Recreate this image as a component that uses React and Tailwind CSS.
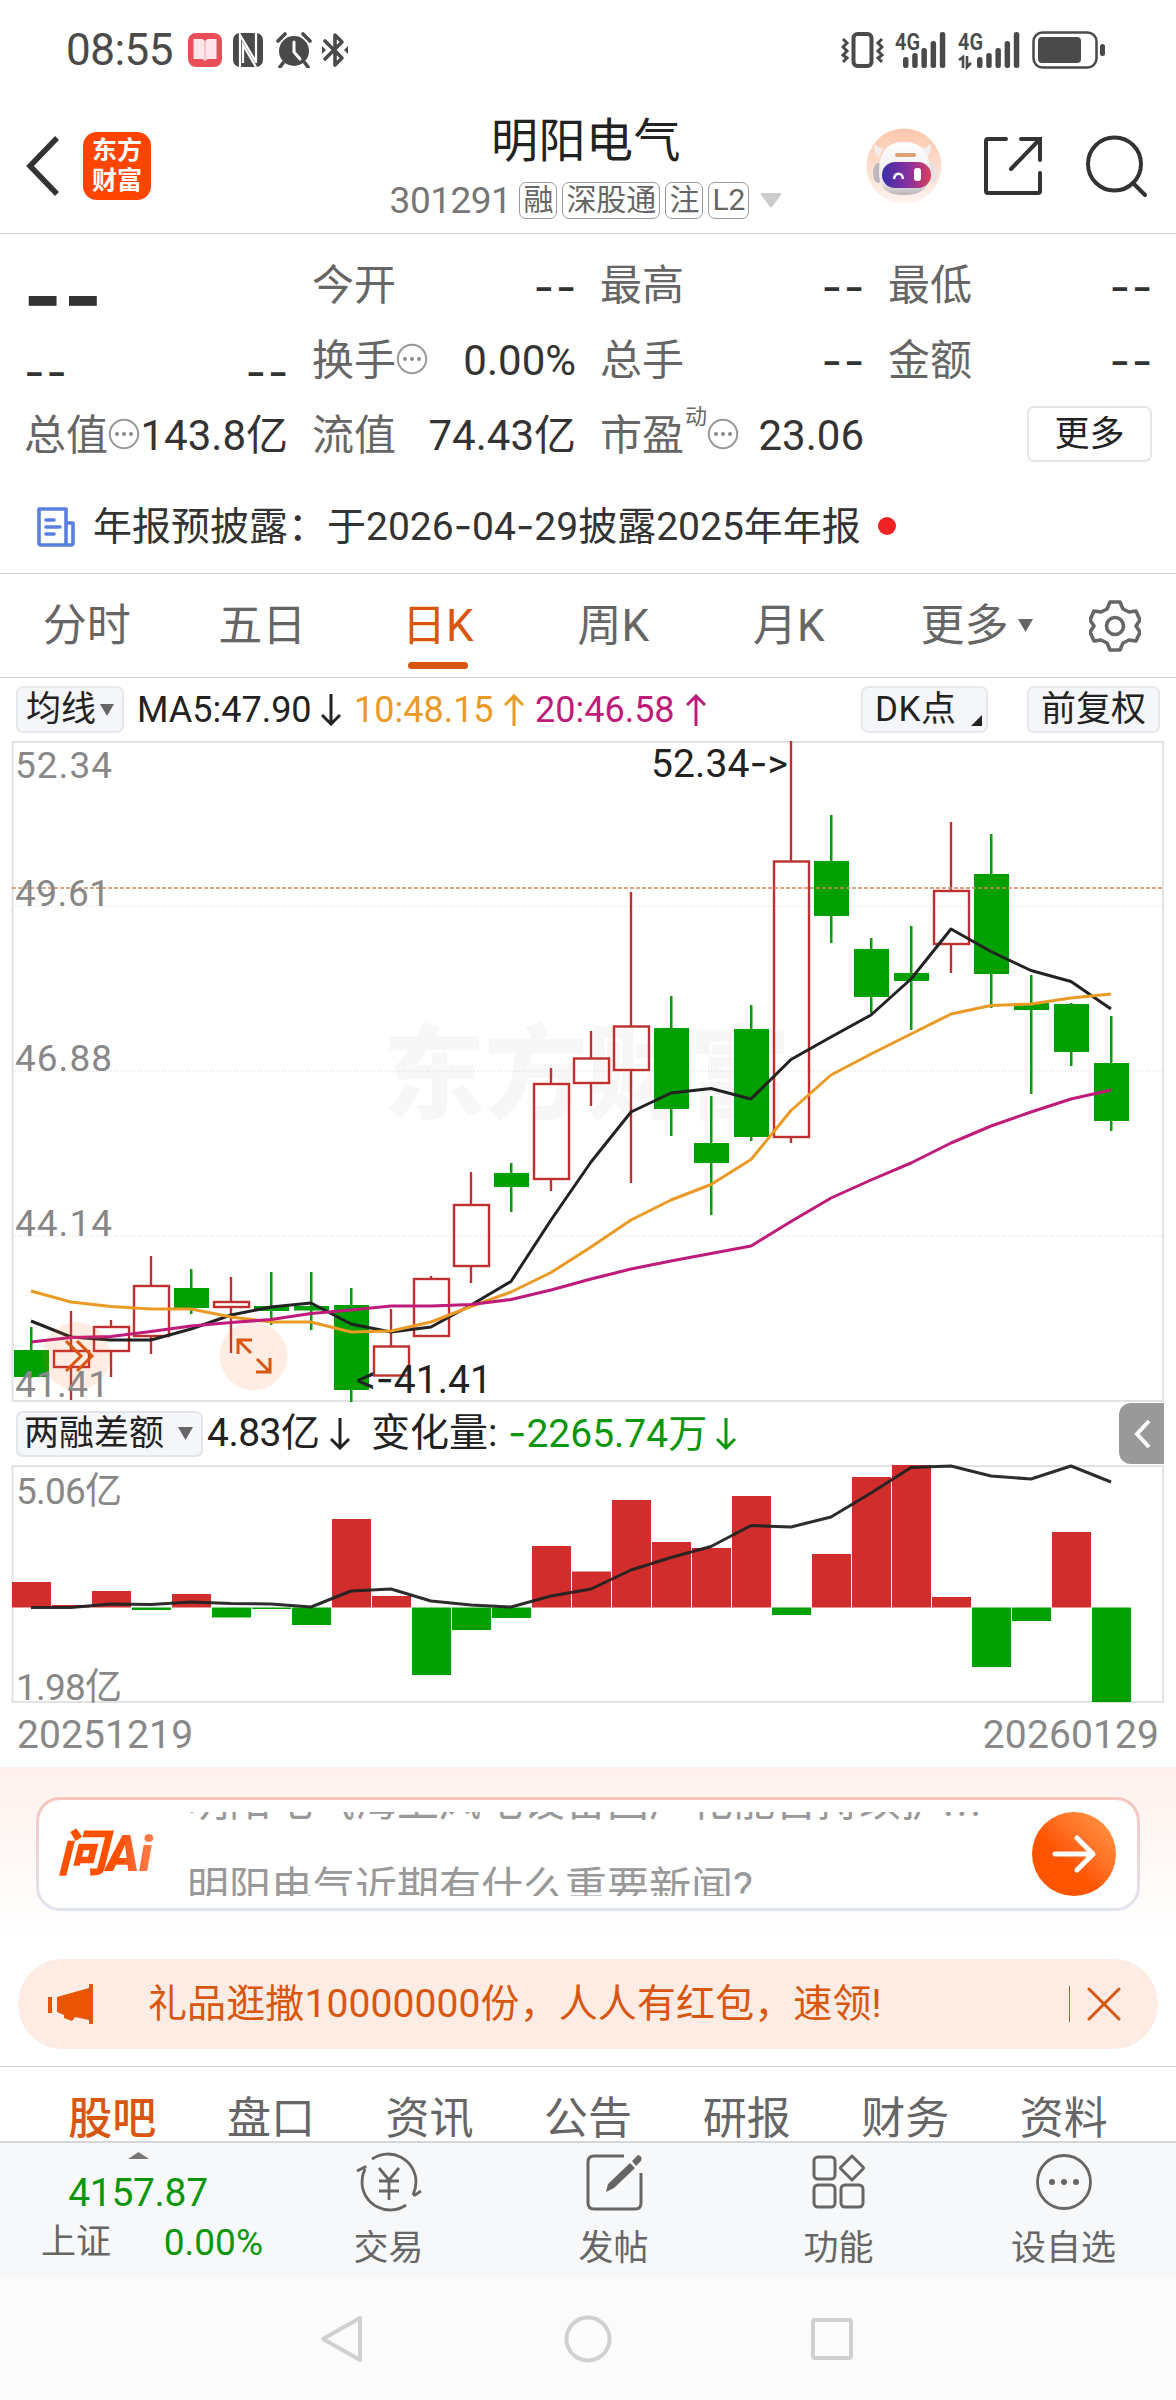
import { clsx } from "clsx";

// kind, high, body top, body bottom, low (px inside the chart)
const candles = [
    ["down", 586, 609, 636, 637],
    ["up", 570, 610, 626, 659],
    ["up", 579, 586, 610, 636],
    ["up", 515, 545, 595, 613],
    ["down", 528, 547, 567, 573],
    ["up", 536, 561, 566, 612],
    ["down", 531, 565, 570, 584],
    ["down", 531, 565, 569.5, 589],
    ["down", 547, 564, 649, 661],
    ["up", 568, 605.5, 634.5, 635],
    ["up", 535, 538, 595, 596],
    ["up", 431, 464, 525, 542],
    ["down", 422, 432, 446, 471],
    ["up", 327, 343, 438, 450],
    ["up", 290, 317.5, 342, 365],
    ["up", 151, 285.5, 329, 442],
    ["down", 255, 287, 368, 395],
    ["down", 355, 402, 422, 474],
    ["down", 264, 288, 396, 400],
    ["up", 0, 120.5, 396, 402],
    ["down", 74, 120, 175, 202],
    ["down", 197, 208, 256, 272],
    ["down", 185, 232, 240, 289],
    ["up", 81, 150, 203, 232],
    ["down", 93, 133, 233, 267],
    ["down", 234, 262, 269, 353],
    ["down", 262, 263, 311, 325],
    ["down", 275, 322, 380, 390],
];

const ma5 = [580, 596, 599, 599, 588, 574, 566, 562, 583, 591, 586, 564, 540.5, 479, 421, 371, 352, 347.5, 358, 318.5, 296, 274, 238, 188, 210.5, 229.5, 240.5, 268];
const ma10 = [550, 561, 565.5, 568, 568, 576, 581, 581, 591, 590, 581, 565.5, 551, 531.5, 506, 479, 459, 443.5, 418.5, 369.5, 334, 313, 293, 273, 264.5, 263, 257, 253];
const ma20 = [601, 596.5, 595.5, 590.5, 585, 581.5, 578.5, 572.5, 569, 565, 565, 563.5, 558.5, 549, 538, 528, 520, 512.5, 505, 480.5, 457, 439, 422, 402, 385, 371, 358, 349];

const ZERO = 142.5;
const bars = [117, 140, 126, 145, 129, 152.5, 144, 160, 54, 131, 210, 165, 153, 81, 106.5, 35, 77, 83, 31, 150, 89, 12, 0, 132, 202, 156, 67, 237];
const diffLine = [142.5, 142.5, 139, 139.5, 137, 138.5, 139, 142, 126, 124, 136, 140, 142, 131, 124, 105, 92.5, 81.5, 60.5, 62, 52, 28, 2.5, 1, 11, 14, 1, 17];

const centerX = (i) => 31 + i * 40;
const toPoints = (values) => values.map((v, i) => `${centerX(i)},${v}`).join(" ");

const periodTabs = ["分时", "五日", "日K", "周K", "月K"];
const infoTabs = ["股吧", "盘口", "资讯", "公告", "研报", "财务", "资料"];

function Dashes() {
    return <span className="-mr-[2px] font-['Inter'] text-[45px] tracking-[1.5px] text-[#333]">--</span>;
}

function Hyphen() {
    return <span className="font-['Inter'] text-[40px] leading-none">-</span>;
}

function InfoDots() {
    return (
        <svg className="mb-1 h-[32px] w-[32px] shrink-0" viewBox="0 0 32 32">
            <circle cx="16" cy="16" r="14.2" fill="none" stroke="#999" strokeWidth="2" />
            <circle cx="9" cy="16" r="2" fill="#888" />
            <circle cx="16" cy="16" r="2" fill="#888" />
            <circle cx="23" cy="16" r="2" fill="#888" />
        </svg>
    );
}

function Stat({ label, value, info }) {
    return (
        <div className="flex items-center justify-between">
            <div className="flex items-center">
                <span className="text-[#666]">{label}</span>
                {info && <InfoDots />}
            </div>
            {value ? <span className="text-[#333]">{value}</span> : <Dashes />}
        </div>
    );
}

function Badge({ children }) {
    return (
        <span className="flex h-[37px] items-center rounded-[7px] border border-[#999] px-[3px] text-[30px] leading-none text-[#666]">
            {children}
        </span>
    );
}

function StatusBar() {
    return (
        <div className="flex h-[100px] items-center justify-between pl-[66px] pr-[70px] text-[#4a4a4a]">
            <div className="flex items-center">
                <span className="w-[122px] text-[44px] leading-none tracking-[-0.5px]">08:55</span>
                <svg className="h-[34px] w-[34px]" viewBox="0 0 34 34">
                    <rect width="34" height="34" rx="8" fill="#ea4e58" />
                    <path d="M5.500 6h9l2.500 2 2.500-2h9v20h-9l-2.500 2-2.500-2h-9z" fill="#fde6ea" />
                    <path d="M17 8v20" stroke="#f3a9b3" strokeWidth="1.200" />
                </svg>
                <svg className="ml-[10px] h-[34px] w-[32px]" viewBox="0 0 32 34">
                    <rect x="1" y="0" width="30" height="34" rx="7" fill="#4a4a4a" />
                    <path d="M8 34V2l16 27M24 0v30M11 30V12l13 22" fill="none" stroke="#fff" strokeWidth="2.200" />
                </svg>
                <svg className="ml-[12px] h-[36px] w-[36px]" viewBox="0 0 36 36">
                    <circle cx="18" cy="19" r="15" fill="#4a4a4a" />
                    <path d="M2 9l7-7M34 9l-7-7M7 31l-3 4M29 31l3 4" stroke="#4a4a4a" strokeWidth="3.600" strokeLinecap="round" />
                    <path d="M18 10v10l6 7" fill="none" stroke="#fff" strokeWidth="3" strokeLinecap="round" />
                </svg>
                <svg className="ml-[10px] h-[36px] w-[26px]" viewBox="0 0 26 36">
                    <path d="M3 9l17 17-7 7V3l7 7L3 27" fill="none" stroke="#4a4a4a" strokeWidth="3.600" strokeLinejoin="round" strokeLinecap="round" />
                    <path d="M0 14l4 4-4 4zM26 14l-4 4 4 4z" fill="#4a4a4a" />
                </svg>
            </div>
            <div className="flex items-center">
                <svg className="h-[36px] w-[43px]" viewBox="0 0 43 36" fill="none" stroke="#4a4a4a">
                    <rect x="12.500" y="2" width="18" height="32" rx="4" strokeWidth="4" />
                    <path d="M2 7l4 4-4 4 4 4-4 4 4 3-4 4M41 7l-4 4 4 4-4 4 4 4-4 3 4 4" strokeWidth="3" />
                </svg>
                <Signal />
                <Signal data />
                <svg className="ml-[11px] h-[38px] w-[74px]" viewBox="0 0 74 38">
                    <rect x="1.500" y="1.500" width="63" height="35" rx="9" fill="none" stroke="#4a4a4a" strokeWidth="2.500" />
                    <rect x="6" y="6" width="43" height="26" rx="4" fill="#4a4a4a" />
                    <rect x="68" y="13" width="5" height="12" rx="2.500" fill="#4a4a4a" />
                </svg>
            </div>
        </div>
    );
}

function Signal({ data }) {
    const left = data ? 19 : 8;
    return (
        <svg className={clsx("ml-[11px] h-[36px] overflow-visible", data ? "w-[63px]" : "w-[52px]")} viewBox={data ? "0 0 63 36" : "0 0 52 36"}>
            <text x="0" y="18" fontSize="23" fontWeight="600" textLength="25" lengthAdjust="spacingAndGlyphs" fill="#4a4a4a">4G</text>
            {[11, 15, 20, 27, 36].map((h, i) => (
                <rect key={h} x={left + i * 9.2} y={36 - h} width="5.500" height={h} rx="2.500" fill="#4a4a4a" />
            ))}
            {data && <path d="M1 28l4-3v11M9 24v11l4-4" fill="none" stroke="#4a4a4a" strokeWidth="2.600" />}
        </svg>
    );
}

function Robot() {
    return (
        <svg className="h-[76px] w-[76px]" viewBox="0 0 76 76">
            <defs>
                <linearGradient id="robotBg" x1="0" y1="0" x2="0" y2="1">
                    <stop offset="0" stopColor="#fcc6ac" />
                    <stop offset="1" stopColor="#fef4ef" />
                </linearGradient>
                <linearGradient id="visor">
                    <stop offset="0" stopColor="#3a2fa8" />
                    <stop offset="0.550" stopColor="#8a2fa0" />
                    <stop offset="1" stopColor="#d8405c" />
                </linearGradient>
                <linearGradient id="helmet" x1="0" y1="0" x2="0" y2="1">
                    <stop offset="0" stopColor="#fff" />
                    <stop offset="0.750" stopColor="#ebe8ea" />
                    <stop offset="1" stopColor="#b9b4b8" />
                </linearGradient>
            </defs>
            <circle cx="38" cy="38" r="37.500" fill="url(#robotBg)" />
            <path d="M9 15c1 4 4 5 8 5l-4 9c-5-3-6-9-4-14zM64 15c-1 4-4 5-8 5l4 9c5-3 6-9 4-14z" fill="#f2eeee" />
            <ellipse cx="12" cy="45" rx="5" ry="10" fill="#bdb8c0" />
            <ellipse cx="66" cy="45" rx="5" ry="10" fill="#e6e0e2" />
            <path d="M13 45c0-21 8-31 25-31s26 10 26 31c0 15-9 22-26 22s-25-7-25-22z" fill="url(#helmet)" />
            <rect x="29" y="25" width="21" height="4" rx="2" fill="#dca077" />
            <rect x="16" y="34" width="49" height="26" rx="13" fill="url(#visor)" />
            <path d="M28 51c1-7 8-7 9 0" fill="none" stroke="#fff" strokeWidth="2.500" />
            <rect x="48" y="40" width="7" height="13" rx="3" fill="#fff" />
        </svg>
    );
}

function Header() {
    return (
        <div className="flex h-[134px] items-center border-b border-[#d4d4d4] pb-[2px]">
            <svg className="ml-[25px] h-[60px] w-[36px]" viewBox="0 0 36 60" fill="none" stroke="#333" strokeWidth="5.500">
                <path d="M32 2L5 30l27 28" />
            </svg>
            <div className="ml-[22px] flex h-[68px] w-[68px] flex-col items-center justify-center rounded-[14px] bg-[#ff4400] text-[25px] font-bold leading-[30px] text-white">
                <span>东方</span>
                <span>财富</span>
            </div>
            <div className="ml-[239px] flex w-[392px] flex-col items-center">
                <h1 className="text-[47px] font-normal leading-[60px] tracking-[0.5px] text-[#222]">明阳电气</h1>
                <div className="mt-[9px] flex h-[40px] items-center gap-[5px]">
                    <span className="mr-[3px] text-[37px] leading-none tracking-[-0.5px] text-[#777]">301291</span>
                    <Badge>融</Badge>
                    <Badge>深股通</Badge>
                    <Badge>注</Badge>
                    <Badge>L2</Badge>
                    <svg className="ml-[6px] h-[15px] w-[22px]" viewBox="0 0 22 15">
                        <path d="M2 0h18q2 0 1 2L12 14q-1 1-2 0L1 2Q0 0 2 0z" fill="#ccc" />
                    </svg>
                </div>
            </div>
            <div className="ml-[84px]">
                <Robot />
            </div>
            <svg className="ml-[41px] h-[60px] w-[60px]" viewBox="0 0 60 60" fill="none" stroke="#333" strokeWidth="4" strokeLinecap="round">
                <path d="M23 3H5Q3 3 3 5v50q0 2 2 2h50q2 0 2-2V37M38 3h19v21M56 4L28 33" />
            </svg>
            <svg className="ml-[43px] h-[62px] w-[62px]" viewBox="0 0 62 62" fill="none" stroke="#333" strokeWidth="4" strokeLinecap="round">
                <circle cx="28.500" cy="29" r="26.500" />
                <path d="M47 48l12 12" />
            </svg>
        </div>
    );
}

function Quote() {
    return (
        <div className="h-[340px] border-b border-[#d4d4d4]">
            <div className="grid grid-cols-[264px_264px_264px_264px] grid-rows-[74px_75px_75px] gap-x-6 px-6 pt-[15px] text-[42px] leading-none">
                <div className="row-span-2 flex flex-col justify-between pb-[4px]">
                    <span className="-ml-[1px] pt-[7px] font-['Inter'] text-[84px] font-bold leading-[80px] tracking-[1px] text-[#333]">--</span>
                    <div className="flex justify-between">
                        <Dashes />
                        <Dashes />
                    </div>
                </div>
                <Stat label="今开" />
                <Stat label="最高" />
                <Stat label="最低" />
                <Stat label="换手" value="0.00%" info />
                <Stat label="总手" />
                <Stat label="金额" />
                <Stat label="总值" value="143.8亿" info />
                <Stat label="流值" value="74.43亿" />
                <div className="flex items-center">
                    <span className="text-[#666]">市盈</span>
                    <span className="mb-[38px] ml-px text-[22px] text-[#666]">动</span>
                    <InfoDots />
                    <span className="ml-auto text-[#333]">23.06</span>
                </div>
                <div className="flex items-center justify-end">
                    <button className="mb-[3px] h-[56px] w-[125px] rounded-[7px] border-2 border-[#e6e6e6] text-[35px] leading-none text-[#222]">更多</button>
                </div>
            </div>
            <div className="flex h-[106px] items-center pl-[37px] text-[39px] leading-none text-[#333]">
                <svg className="mt-[2px] h-[40px] w-[38px]" viewBox="0 0 38 40" fill="none" stroke="#5a7fe0" strokeWidth="3.600" strokeLinejoin="round" strokeLinecap="round">
                    <path d="M2 2h27v36H4q-2 0-2-2zM29 16h7v20q0 2-2 2h-5M9 13h8M9 20h14M9 27h8" />
                </svg>
                <span className="ml-[18px]">
                    年报预披露：于2026<Hyphen />04<Hyphen />29披露2025年年报
                </span>
                <span className="ml-[17px] h-[18px] w-[18px] rounded-full bg-[#f02222]" />
            </div>
        </div>
    );
}

function PeriodTabs() {
    return (
        <div className="flex h-[104px] items-center border-b border-[#d4d4d4] text-[44px] leading-none text-[#666]">
            {periodTabs.map((tab) => (
                <div
                    key={tab}
                    className={clsx("relative -left-px flex h-full w-[175.500px] items-center justify-center", tab === "日K" && "text-[#d9560f]")}
                >
                    {tab}
                    {tab === "日K" && <span className="absolute bottom-[8px] h-[7px] w-[60px] rounded-full bg-[#d9560f]" />}
                </div>
            ))}
            <div className="ml-[43px] flex items-center gap-[9px]">
                更多
                <svg className="h-[13px] w-[15px]" viewBox="0 0 15 13">
                    <path d="M0 0h15L7.500 13z" fill="#666" />
                </svg>
            </div>
            <svg className="ml-[56px] h-[52px] w-[52px]" viewBox="0 0 52 52" fill="none" stroke="#666" strokeWidth="3.600" strokeLinejoin="round">
                <path d="M21 2h10l3 7 6 3 7-1 4 9-4 6 4 6-4 9-7-1-6 3-3 7H21l-3-7-6-3-7 1-4-9 4-6-4-6 4-9 7 1 6-3z" />
                <circle cx="26" cy="26" r="8.500" />
            </svg>
        </div>
    );
}

function Arrow({ up }) {
    return (
        <svg className="h-[32px] w-[20px]" viewBox="0 0 20 32" fill="none" stroke="currentColor" strokeWidth="3">
            <path d={up ? "M10 32V2M1 11l9-9 9 9" : "M10 0v30M1 21l9 9 9-9"} />
        </svg>
    );
}

function IndicatorRow() {
    return (
        <div className="flex h-[63px] items-center pl-[16px] pr-[16px] text-[36px] leading-none text-[#222]">
            <div className="flex h-[47px] w-[108px] items-center justify-center gap-[4px] rounded-[7px] border-2 border-[#e6e8ec] bg-[#f5f6f9] text-[35px]">
                均线
                <svg className="h-[12px] w-[14px]" viewBox="0 0 14 12">
                    <path d="M0 0h14L7 12z" fill="#666" />
                </svg>
            </div>
            <div className="ml-[13px] flex items-center">
                <span className="w-[184px]">MA5:47.90</span>
                <Arrow />
            </div>
            <div className="ml-[13px] flex items-center text-[#ec9a26]">
                <span className="w-[150px]">10:48.15</span>
                <Arrow up />
            </div>
            <div className="ml-[11px] flex items-center text-[#bf1b7b]">
                <span className="w-[151px]">20:46.58</span>
                <Arrow up />
            </div>
            <div className="relative ml-auto flex h-[47px] w-[127px] items-center rounded-[7px] border-2 border-[#e6e8ec] bg-[#f5f6f9] pl-[12px] text-[35px] tracking-[0.5px]">
                DK点
                <svg className="absolute bottom-[5px] right-[4px] h-[11px] w-[11px]" viewBox="0 0 11 11">
                    <path d="M11 0v11H0z" fill="#222" />
                </svg>
            </div>
            <div className="ml-[39px] flex h-[47px] w-[133px] items-center justify-center rounded-[7px] border-2 border-[#e6e8ec] bg-[#f5f6f9] text-[35px]">
                前复权
            </div>
        </div>
    );
}

function CandleChart() {
    return (
        <svg className="block h-[661px] w-[1176px] overflow-visible" viewBox="0 0 1176 661">
            <text x="383" y="370" fontSize="102" fontWeight="900" fill="#f7f7f7">东方财富</text>
            <path d="M12 165H1163M12 330H1163M12 495H1163" stroke="#d4d4d4" strokeDasharray="1 2" />
            <rect x="12.500" y="1" width="1150.500" height="659" fill="none" stroke="#e2e2e2" strokeWidth="2" />
            {candles.map(([kind, high, top, bottom, low], i) => {
                const x = centerX(i);
                if (kind === "down") {
                    return (
                        <g key={i} fill="#00a000">
                            <rect x={x - 1} y={high} width="2.500" height={low - high} />
                            <rect x={x - 17} y={top} width="35" height={bottom - top} />
                        </g>
                    );
                }
                return (
                    <g key={i} stroke="#c0302f" strokeWidth="2.400" fill="none">
                        <path d={`M${x} ${high}V${top}M${x} ${bottom}V${low}`} />
                        <rect x={x - 17} y={top} width="35" height={bottom - top} />
                    </g>
                );
            })}
            <path d="M12 147H1163" stroke="#c98a58" strokeWidth="1.500" strokeDasharray="4 2" />
            <g fill="none" strokeWidth="3" strokeLinejoin="round">
                <polyline points={toPoints(ma5)} stroke="#222" />
                <polyline points={toPoints(ma10)} stroke="#ec9a26" />
                <polyline points={toPoints(ma20)} stroke="#bf1b7b" />
            </g>
            <circle cx="76.500" cy="615" r="34" fill="#ff6a20" fillOpacity="0.120" />
            <circle cx="253.500" cy="615" r="34" fill="#ff6a20" fillOpacity="0.120" />
            <g fill="none" stroke="#d9560f" strokeWidth="3">
                <path d="M66 600l15 15-15 15M77 600l15 15-15 15" />
                <path d="M238 613v-14h14M239 600l12 12M270 617v14h-14M269 630l-12-12" />
            </g>
            <g fill="#888" fontSize="37">
                <text x="15" y="37" textLength="97">52.34</text>
                <text x="15" y="165" textLength="95">49.61</text>
                <text x="15" y="330" textLength="97">46.88</text>
                <text x="15" y="495" textLength="97">44.14</text>
                <text x="15" y="656" textLength="94">41.41</text>
            </g>
            <g fill="#222" fontSize="39">
                <text x="651" y="36" textLength="137">52.34<tspan fontFamily="Inter">-</tspan>&gt;</text>
                <text x="356" y="652" textLength="136">&lt;<tspan fontFamily="Inter">-</tspan>41.41</text>
            </g>
        </svg>
    );
}

function DiffRow() {
    return (
        <div className="flex h-[63px] items-center pl-[16px] text-[39px] leading-none text-[#222]">
            <div className="flex h-[46px] w-[187px] items-center justify-between rounded-[7px] border-2 border-[#e2e5ea] bg-[#f5f6f9] pl-[6px] pr-[8px] text-[35px]">
                两融差额
                <svg className="h-[13px] w-[15px]" viewBox="0 0 15 13">
                    <path d="M0 0h15L7.500 13z" fill="#666" />
                </svg>
            </div>
            <span className="ml-[4px] w-[123px] tracking-[-0.5px]">4.83亿</span>
            <Arrow />
            <span className="ml-[21px] w-[137px]">变化量:</span>
            <div className="flex items-center text-[#0c960c]">
                <span className="w-[208px]"><Hyphen />2265.74万</span>
                <Arrow />
            </div>
            <div className="ml-auto mr-[12px] flex h-[61px] w-[45px] items-center justify-center rounded-l-[12px] bg-[#999]">
                <svg className="h-[30px] w-[18px]" viewBox="0 0 18 30" fill="none" stroke="#fff" strokeWidth="4">
                    <path d="M16 2L4 15l12 13" />
                </svg>
            </div>
        </div>
    );
}

function DiffChart() {
    return (
        <svg className="block h-[239px] w-[1176px] overflow-visible" viewBox="0 0 1176 239">
            <rect x="12.500" y="1" width="1150.500" height="236" fill="none" stroke="#e2e2e2" strokeWidth="2" />
            {bars.map((v, i) => (
                <rect
                    key={i}
                    x={12 + i * 40}
                    y={Math.min(v, ZERO)}
                    width="39"
                    height={Math.abs(v - ZERO)}
                    fill={v < ZERO ? "#d02d2c" : "#00a000"}
                />
            ))}
            <polyline points={toPoints(diffLine)} fill="none" stroke="#222" strokeOpacity="0.950" strokeWidth="3" strokeLinejoin="round" />
            <g fill="#888" fontSize="37">
                <text x="16" y="39" textLength="106">5.06亿</text>
                <text x="16" y="235" textLength="106">1.98亿</text>
            </g>
        </svg>
    );
}

function AskAi() {
    return (
        <div className="h-[192px] bg-linear-to-b from-[#fff1ed] to-white to-90% px-[36px] pt-[30px]">
            <div className="h-[114px] rounded-[24px] bg-linear-to-b from-[#f6c5bd] to-[#e0e5f0] p-[3px]">
                <div className="flex h-full items-center rounded-[21px] bg-white pl-[18px] pr-[21px]">
                    <span className="w-[126px] bg-linear-to-r from-[#ff5000] from-50% to-[#ffa070] bg-clip-text text-[50px] font-black italic leading-[60px] tracking-[-0.5px] text-transparent">
                        问Ai
                    </span>
                    <div className="h-[84px] flex-1 overflow-hidden pl-[4px] text-[42px] leading-[86px] text-[#999]">
                        <p className="-mt-[53px]">明阳电气海上风电设备国产化能否持续扩<span className="tracking-[2.5px]">...</span></p>
                        <p>明阳电气近期有什么重要新闻?</p>
                    </div>
                    <button className="flex h-[84px] w-[84px] items-center justify-center rounded-full bg-linear-to-bl from-[#ff9a45] to-[#ff5400] to-60%">
                        <svg className="h-[40px] w-[44px]" viewBox="0 0 44 40" fill="none" stroke="#fff" strokeWidth="5" strokeLinecap="round" strokeLinejoin="round">
                            <path d="M3 20h37M25 4l16 16-16 16" />
                        </svg>
                    </button>
                </div>
            </div>
        </div>
    );
}

function Banner() {
    return (
        <div className="mx-[18px] flex h-[90px] items-center rounded-full bg-[#fcece3] text-[39px] leading-none text-[#d9560f]">
            <svg className="ml-[30px] h-[40px] w-[46px]" viewBox="0 0 46 40" fill="#ea5504">
                <path d="M0 13h4v16H0zM9 13L41 4V0h4v40h-4v-4l-14-3-3 4-8-3v-3l-7-3z" />
            </svg>
            <span className="ml-[54px] tracking-[0.1px]">礼品逛撒10000000份，人人有红包，速领!</span>
            <span className="ml-auto h-[36px] w-px bg-[#b5622f]" />
            <svg className="ml-[17px] mr-[37px] h-[34px] w-[34px]" viewBox="0 0 34 34" stroke="#d9560f" strokeWidth="3" strokeLinecap="round">
                <path d="M2 2l30 30M32 2L2 32" />
            </svg>
        </div>
    );
}

const actions = [
    {
        label: "交易",
        icon: (
            <svg className="h-[60px] w-[68px]" viewBox="0 0 68 60" fill="none" stroke="#666" strokeWidth="2.800">
                <path d="M17 7a28 28 0 0 1 44 23q0 6-3 13M51 53A28 28 0 0 1 7 30q0-7 3-13" />
                <path d="M2 19l8-4 1 1M66 39l-6 4-2 0" />
                <path d="M24 16l10 12 10-12M34 28v20M24 29h20M24 39h20" />
            </svg>
        ),
    },
    {
        label: "发帖",
        icon: (
            <svg className="h-[60px] w-[60px]" viewBox="0 0 60 60" fill="none" stroke="#666" strokeWidth="3">
                <path d="M40 4H10q-6 0-6 6v41q0 6 6 6h41q6 0 6-6V21" />
                <path d="M22 40l2-8 22-21 5 5-21 20z" fill="#666" stroke="none" />
                <path d="M48 9l6-6q5 1 3 6l-5 5z" fill="#666" stroke="none" />
            </svg>
        ),
    },
    {
        label: "功能",
        icon: (
            <svg className="h-[60px] w-[60px]" viewBox="0 0 60 60" fill="none" stroke="#666" strokeWidth="3" strokeLinejoin="round">
                <rect x="5" y="5" width="21" height="22" rx="4" />
                <path d="M43 4l11 11q1 1 0 2L43 28 32 17q-1-1 0-2z" />
                <rect x="5" y="33" width="21" height="22" rx="4" />
                <rect x="32" y="33" width="22" height="22" rx="4" />
            </svg>
        ),
    },
    {
        label: "设自选",
        icon: (
            <svg className="h-[60px] w-[60px]" viewBox="0 0 60 60">
                <circle cx="30" cy="30" r="26.500" fill="none" stroke="#666" strokeWidth="2.800" />
                <circle cx="18" cy="30" r="3" fill="#666" />
                <circle cx="30" cy="30" r="3" fill="#666" />
                <circle cx="42" cy="30" r="3" fill="#666" />
            </svg>
        ),
    },
];

function BottomBar() {
    return (
        <div className="flex h-[137px] border-t-2 border-[#d4d6d9] bg-[#f6f8fa]">
            <div className="flex w-[276px] flex-col items-center pt-[9px] leading-none">
                <svg className="h-[7px] w-[21px]" viewBox="0 0 21 7">
                    <path d="M10.500 0L21 7H0z" fill="#777" />
                </svg>
                <span className="mt-[15px] text-[39px] tracking-[-0.3px] text-[#0c960c]">4157.87</span>
                <div className="mt-[11px] flex w-full items-center justify-between pl-[41px] pr-[13px]">
                    <span className="text-[35px] text-[#666]">上证</span>
                    <span className="text-[37px] text-[#0c960c]">0.00%</span>
                </div>
            </div>
            {actions.map((action) => (
                <div key={action.label} className="flex w-[225px] flex-col items-center pt-[9px] text-[35px] leading-none text-[#666]">
                    {action.icon}
                    <span className="mt-[19px]">{action.label}</span>
                </div>
            ))}
        </div>
    );
}

function SystemNav() {
    return (
        <div className="flex h-[122px] items-center bg-[#fbfbfb] pl-[319px]">
            <svg className="h-[50px] w-[46px]" viewBox="0 0 46 50" fill="none" stroke="#d0d0d0" strokeWidth="4" strokeLinejoin="round">
                <path d="M41 4v42L4 25z" />
            </svg>
            <svg className="ml-[198px] h-[50px] w-[50px]" viewBox="0 0 50 50" fill="none" stroke="#d0d0d0" strokeWidth="4">
                <circle cx="25" cy="25" r="21.500" />
            </svg>
            <svg className="ml-[194px] h-[50px] w-[50px]" viewBox="0 0 50 50" fill="none" stroke="#d0d0d0" strokeWidth="4">
                <rect x="6" y="6" width="38" height="38" rx="2" />
            </svg>
        </div>
    );
}

export default function App() {
    return (
        <div className="h-[2400px] w-[1176px] overflow-hidden whitespace-nowrap bg-white font-[Roboto,'Noto_Sans_CJK_SC',sans-serif]">
            <StatusBar />
            <Header />
            <Quote />
            <PeriodTabs />
            <IndicatorRow />
            <CandleChart />
            <DiffRow />
            <DiffChart />
            <div className="flex h-[63px] items-center justify-between px-[17px] text-[39px] leading-none tracking-[0.1px] text-[#888]">
                <span>20251219</span>
                <span>20260129</span>
            </div>
            <AskAi />
            <Banner />
            <div className="mt-[17px] flex h-[75px] items-end border-t border-[#d4d4d4] pl-[33px] text-[44px] leading-[44px] text-[#666]">
                {infoTabs.map((tab, i) => (
                    <span key={tab} className={clsx("w-[158.600px] text-center", i === 0 && "font-medium text-[#d9560f]")}>
                        {tab}
                    </span>
                ))}
            </div>
            <BottomBar />
            <SystemNav />
        </div>
    );
}
